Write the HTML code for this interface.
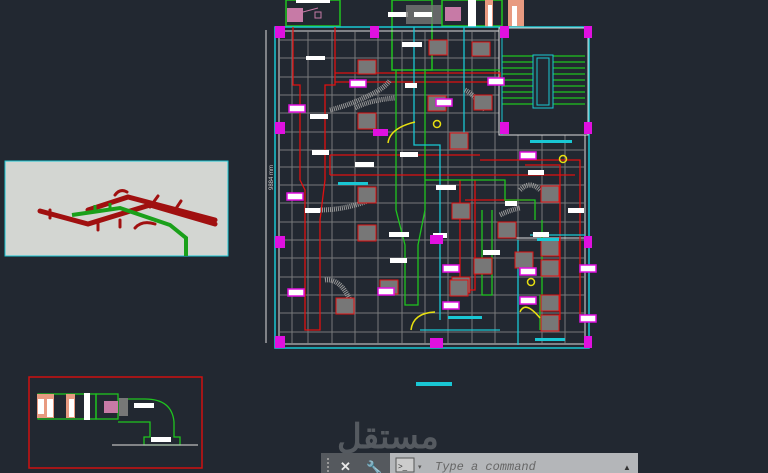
<!DOCTYPE html>
<html><head><meta charset="utf-8"><style>
html,body{margin:0;padding:0;background:#222831;width:768px;height:473px;overflow:hidden;font-family:"Liberation Sans",sans-serif}
svg{position:absolute;left:0;top:0}
</style></head><body>
<svg width="768" height="473" viewBox="0 0 768 473" xmlns="http://www.w3.org/2000/svg">
<rect width="768" height="473" fill="#222831"/>
<rect x="286" y="0" width="54" height="26" fill="none" stroke="#1fc41f" stroke-width="1.5"/>
<rect x="296" y="0" width="34" height="3" fill="#fff"/>
<rect x="287" y="8" width="16" height="14" fill="#c77aa6"/>
<rect x="315" y="12" width="6" height="6" fill="none" stroke="#c77aa6"/>
<line x1="303" y1="12" x2="318" y2="8" stroke="#c77aa6"/>
<rect x="392" y="0" width="40" height="70" fill="none" stroke="#1fc41f" stroke-width="1.5"/>
<rect x="388" y="12" width="20" height="5" fill="#fff"/>
<rect x="406" y="5" width="36" height="19" fill="#777" opacity=".8"/>
<rect x="414" y="12" width="18" height="5" fill="#fff"/>
<rect x="442" y="0" width="60" height="26" fill="none" stroke="#1fc41f" stroke-width="1.5"/>
<rect x="445" y="7" width="16" height="14" fill="#c77aa6"/>
<rect x="468" y="0" width="8" height="27" fill="#fff"/>
<rect x="485" y="0" width="8" height="27" fill="#e89a80"/>
<rect x="488" y="5" width="4" height="22" fill="#fff"/>
<rect x="508" y="0" width="16" height="27" fill="#e89a80"/>
<rect x="512" y="6" width="5" height="20" fill="#fff"/>
<rect x="275" y="27" width="314" height="321" fill="none" stroke="#19c7d4" stroke-width="1.5"/>
<rect x="279" y="31" width="306" height="313" fill="none" stroke="#ddd" stroke-width="1"/>
<line x1="266" y1="30" x2="266" y2="343" stroke="#ddd"/>
<text x="263" y="200" fill="#ccc" font-size="6" transform="rotate(-90 263 190)">9884 mm</text>
<g stroke="#888" stroke-width="1" opacity=".85">
<line x1="292" y1="31" x2="292" y2="344"/><line x1="308" y1="31" x2="308" y2="344"/>
<line x1="332" y1="31" x2="332" y2="344"/><line x1="355" y1="31" x2="355" y2="344"/>
<line x1="378" y1="31" x2="378" y2="344"/><line x1="402" y1="31" x2="402" y2="344"/>
<line x1="425" y1="31" x2="425" y2="344"/><line x1="448" y1="31" x2="448" y2="344"/>
<line x1="472" y1="31" x2="472" y2="344"/><line x1="495" y1="31" x2="495" y2="344"/>
<line x1="518" y1="135" x2="518" y2="344"/><line x1="542" y1="135" x2="542" y2="344"/>
<line x1="565" y1="135" x2="565" y2="344"/>
<line x1="279" y1="40" x2="500" y2="40"/><line x1="279" y1="58" x2="500" y2="58"/>
<line x1="279" y1="77" x2="500" y2="77"/><line x1="279" y1="95" x2="500" y2="95"/>
<line x1="279" y1="113" x2="500" y2="113"/><line x1="279" y1="132" x2="500" y2="132"/>
<line x1="279" y1="150" x2="585" y2="150"/><line x1="279" y1="167" x2="585" y2="167"/>
<line x1="279" y1="185" x2="585" y2="185"/><line x1="279" y1="203" x2="585" y2="203"/>
<line x1="279" y1="222" x2="585" y2="222"/><line x1="279" y1="240" x2="585" y2="240"/>
<line x1="279" y1="258" x2="585" y2="258"/><line x1="279" y1="277" x2="585" y2="277"/>
<line x1="279" y1="295" x2="585" y2="295"/><line x1="279" y1="313" x2="585" y2="313"/>
<line x1="279" y1="332" x2="585" y2="332"/>
</g>
<line x1="500" y1="238" x2="585" y2="238" stroke="#ddd"/>
<rect x="499" y="28" width="89" height="107" fill="#222831" stroke="#ddd"/>
<g stroke="#1fc41f" stroke-width="1.2">
<line x1="502" y1="56" x2="585" y2="56"/><line x1="502" y1="62" x2="585" y2="62"/>
<line x1="502" y1="68" x2="585" y2="68"/><line x1="502" y1="74" x2="585" y2="74"/>
<line x1="502" y1="80" x2="585" y2="80"/><line x1="502" y1="86" x2="585" y2="86"/>
<line x1="502" y1="92" x2="585" y2="92"/><line x1="502" y1="98" x2="585" y2="98"/>
<line x1="502" y1="104" x2="585" y2="104"/>
</g>
<rect x="533" y="55" width="20" height="53" fill="#222831" stroke="#19c7d4"/>
<rect x="537" y="58" width="12" height="47" fill="none" stroke="#19c7d4"/>
<line x1="502" y1="30" x2="502" y2="135" stroke="#19c7d4"/>
<g fill="none" stroke="#e01010" stroke-width="1.3">
<path d="M293 27 V85 H300 V180 L305 190 V330 H320 V220 L325 180 V85 H335 V27"/>
<path d="M335 73 H500 V82 H335"/>
<path d="M330 155 H480 M330 175 H480 M330 155 V175"/>
<path d="M480 160 H580 V320 M480 175 H575"/>
<path d="M460 180 V290 H475 V180"/>
<path d="M525 165 H560 V320"/>
<path d="M465 200 H530"/>
</g>
<g fill="none" stroke="#1fc41f" stroke-width="1.3">
<path d="M396 70 V210 L405 245 V305 H418 V245 L425 210 V70"/>
<path d="M425 180 H505 V200 H535 V220"/>
<path d="M482 210 V295 H492 V210"/>
<path d="M430 70 H500"/>
<path d="M542 220 V300 M540 295 V330"/>
</g>
<g fill="none" stroke="#19c7d4" stroke-width="1.3">
<path d="M414 27 V145 H440 V320"/>
<path d="M464 27 V140"/>
<path d="M518 240 V345 M530 235 H585"/>
<path d="M420 330 H500"/>
</g>
<g fill="none" stroke="#999" stroke-width="5" stroke-dasharray="1 1">
<path d="M330 110 Q350 105 370 95 Q385 88 390 80"/>
<path d="M355 108 Q370 100 395 98"/>
<path d="M320 210 Q345 210 370 200"/>
<path d="M325 280 Q340 278 350 300"/>
<path d="M465 90 Q475 95 485 110"/>
<path d="M520 190 Q530 180 540 190"/>
<path d="M500 215 Q510 210 520 208"/>
</g>
<g fill="#777" stroke="#e01010" stroke-width="1">
<rect x="358" y="60" width="18" height="14"/><rect x="358" y="113" width="18" height="16"/>
<rect x="429" y="40" width="18" height="15"/><rect x="472" y="42" width="18" height="14"/>
<rect x="428" y="96" width="18" height="15"/><rect x="474" y="95" width="18" height="15"/>
<rect x="450" y="133" width="18" height="16"/><rect x="358" y="187" width="18" height="16"/>
<rect x="358" y="225" width="18" height="16"/><rect x="452" y="203" width="18" height="16"/>
<rect x="498" y="222" width="18" height="16"/><rect x="541" y="186" width="18" height="16"/>
<rect x="474" y="258" width="18" height="16"/><rect x="452" y="277" width="18" height="16"/>
<rect x="541" y="240" width="18" height="16"/><rect x="541" y="260" width="18" height="16"/>
<rect x="541" y="295" width="18" height="16"/><rect x="336" y="298" width="18" height="16"/>
<rect x="380" y="280" width="18" height="14"/><rect x="450" y="280" width="18" height="16"/>
<rect x="541" y="315" width="18" height="16"/><rect x="515" y="252" width="18" height="16"/>
</g>
<g fill="#fff" stroke="#e010e0" stroke-width="1.5">
<rect x="289" y="105" width="16" height="7"/><rect x="287" y="193" width="16" height="7"/>
<rect x="288" y="289" width="16" height="7"/><rect x="378" y="288" width="16" height="7"/>
<rect x="443" y="265" width="16" height="7"/><rect x="443" y="302" width="16" height="7"/>
<rect x="520" y="268" width="16" height="7"/><rect x="520" y="297" width="16" height="7"/>
<rect x="580" y="265" width="16" height="7"/><rect x="580" y="315" width="16" height="7"/>
<rect x="520" y="152" width="16" height="7"/><rect x="488" y="78" width="16" height="7"/>
<rect x="350" y="80" width="16" height="7"/><rect x="436" y="99" width="16" height="7"/>
</g>
<g fill="#fff">
<rect x="306" y="56" width="19" height="4"/><rect x="310" y="114" width="18" height="5"/>
<rect x="312" y="150" width="17" height="5"/><rect x="355" y="162" width="19" height="5"/>
<rect x="402" y="42" width="20" height="5"/><rect x="400" y="152" width="18" height="5"/>
<rect x="436" y="185" width="20" height="5"/><rect x="305" y="208" width="15" height="5"/>
<rect x="389" y="232" width="20" height="5"/><rect x="390" y="258" width="17" height="5"/>
<rect x="528" y="170" width="16" height="5"/><rect x="568" y="208" width="16" height="5"/>
<rect x="505" y="201" width="12" height="5"/><rect x="483" y="250" width="17" height="5"/>
<rect x="405" y="83" width="12" height="5"/><rect x="433" y="233" width="14" height="5"/>
<rect x="533" y="232" width="16" height="5"/>
</g>
<g fill="#e010e0">
<rect x="275" y="26" width="10" height="12"/><rect x="584" y="26" width="8" height="12"/>
<rect x="275" y="122" width="10" height="12"/><rect x="275" y="236" width="10" height="12"/>
<rect x="275" y="336" width="10" height="12"/><rect x="430" y="338" width="13" height="10"/>
<rect x="584" y="122" width="8" height="12"/><rect x="584" y="236" width="8" height="12"/>
<rect x="584" y="336" width="8" height="12"/><rect x="370" y="26" width="9" height="12"/>
<rect x="500" y="26" width="9" height="12"/><rect x="500" y="122" width="9" height="12"/>
<rect x="430" y="235" width="13" height="9"/><rect x="373" y="129" width="15" height="7"/>
</g>
<g fill="none" stroke="#e8e010" stroke-width="1.5">
<path d="M388 143 Q390 128 415 122"/>
<path d="M411 330 Q413 313 435 312"/>
<path d="M520 312 Q525 300 540 318"/>
<circle cx="437" cy="124" r="3.5"/><circle cx="563" cy="159" r="3.5"/><circle cx="531" cy="282" r="3.5"/>
</g>
<g fill="#19c7d4">
<rect x="338" y="182" width="30" height="3"/><rect x="530" y="140" width="42" height="3"/>
<rect x="448" y="316" width="34" height="3"/><rect x="537" y="238" width="22" height="3"/>
<rect x="535" y="338" width="30" height="3"/><rect x="416" y="382" width="36" height="4"/>
</g>
<rect x="5" y="161" width="223" height="95" fill="#d3d6d2" stroke="#19c7d4" stroke-width="1"/>
<g stroke="#a01010" stroke-width="5" fill="none" stroke-linecap="round">
<path d="M40 211 L88 224 L150 205 L215 224"/>
<path d="M88 210 L128 197 L215 220"/>
<path d="M115 195 Q120 188 127 192" stroke-width="3"/>
<path d="M50 210 V218 M98 222 V230 M120 220 V227 M135 228 Q142 220 155 224" stroke-width="3"/>
<path d="M150 207 L158 196 M175 210 L181 201" stroke-width="3"/>
</g>
<g stroke="#1aa01a" stroke-width="4" fill="none">
<path d="M72 215 L120 208 L170 225 L186 238 V256"/>
<path d="M95 205 V212 M110 203 V210" stroke-width="3"/>
</g>
<rect x="29" y="377" width="173" height="91" fill="none" stroke="#d01010" stroke-width="1.5"/>
<rect x="38" y="394" width="58" height="25" fill="none" stroke="#1fc41f" stroke-width="1.3"/>
<rect x="37" y="394" width="8" height="24" fill="#e89a80"/><rect x="38" y="399" width="6" height="15" fill="#fff"/>
<rect x="44" y="394" width="10" height="24" fill="#e89a80"/><rect x="47" y="399" width="6" height="18" fill="#fff"/>
<rect x="66" y="394" width="9" height="24" fill="#e89a80"/><rect x="69" y="399" width="5" height="18" fill="#fff"/>
<rect x="84" y="393" width="6" height="27" fill="#fff"/>
<rect x="96" y="394" width="22" height="25" fill="none" stroke="#1fc41f" stroke-width="1.3"/>
<rect x="104" y="401" width="14" height="12" fill="#c77aa6"/>
<path d="M118 399 H145 Q172 399 174 422 V437 H180 V445 H144 V437 H150 V422 H118" fill="none" stroke="#1fc41f" stroke-width="1.3"/>
<rect x="119" y="398" width="9" height="18" fill="#777"/>
<rect x="134" y="403" width="20" height="5" fill="#fff"/>
<rect x="151" y="437" width="20" height="5" fill="#fff"/>
<line x1="112" y1="445" x2="198" y2="445" stroke="#bbb" stroke-width="1.2"/>
<text x="337" y="448" fill="#555a60" font-size="34" font-weight="bold" font-family="'Liberation Sans','WenQuanYi Zen Hei',sans-serif">مستقل</text>
<text x="340" y="465" fill="#555a60" font-size="12">mostaql.com</text>
<rect x="321" y="453" width="70" height="20" fill="#55595e"/>
<g fill="#999"><rect x="327" y="458" width="2" height="2"/><rect x="327" y="462" width="2" height="2"/><rect x="327" y="466" width="2" height="2"/><rect x="327" y="470" width="2" height="2"/></g>
<text x="340" y="471" fill="#e8e8e8" font-size="13" font-weight="bold">✕</text>
<text x="366" y="472" fill="#e8e8e8" font-size="13">🔧</text>
<rect x="390" y="453" width="248" height="20" fill="#b4b6b9"/>
<rect x="396" y="458" width="18" height="14" fill="#ccc" stroke="#555"/>
<text x="398" y="469" fill="#333" font-size="8">&gt;_</text>
<text x="418" y="469" fill="#555" font-size="7">▾</text>
<text x="435" y="470" fill="#666" font-size="12" font-style="italic" font-family="'Liberation Mono',monospace">Type a command</text>
<text x="623" y="470" fill="#333" font-size="8">▲</text>
</svg>
</body></html>
